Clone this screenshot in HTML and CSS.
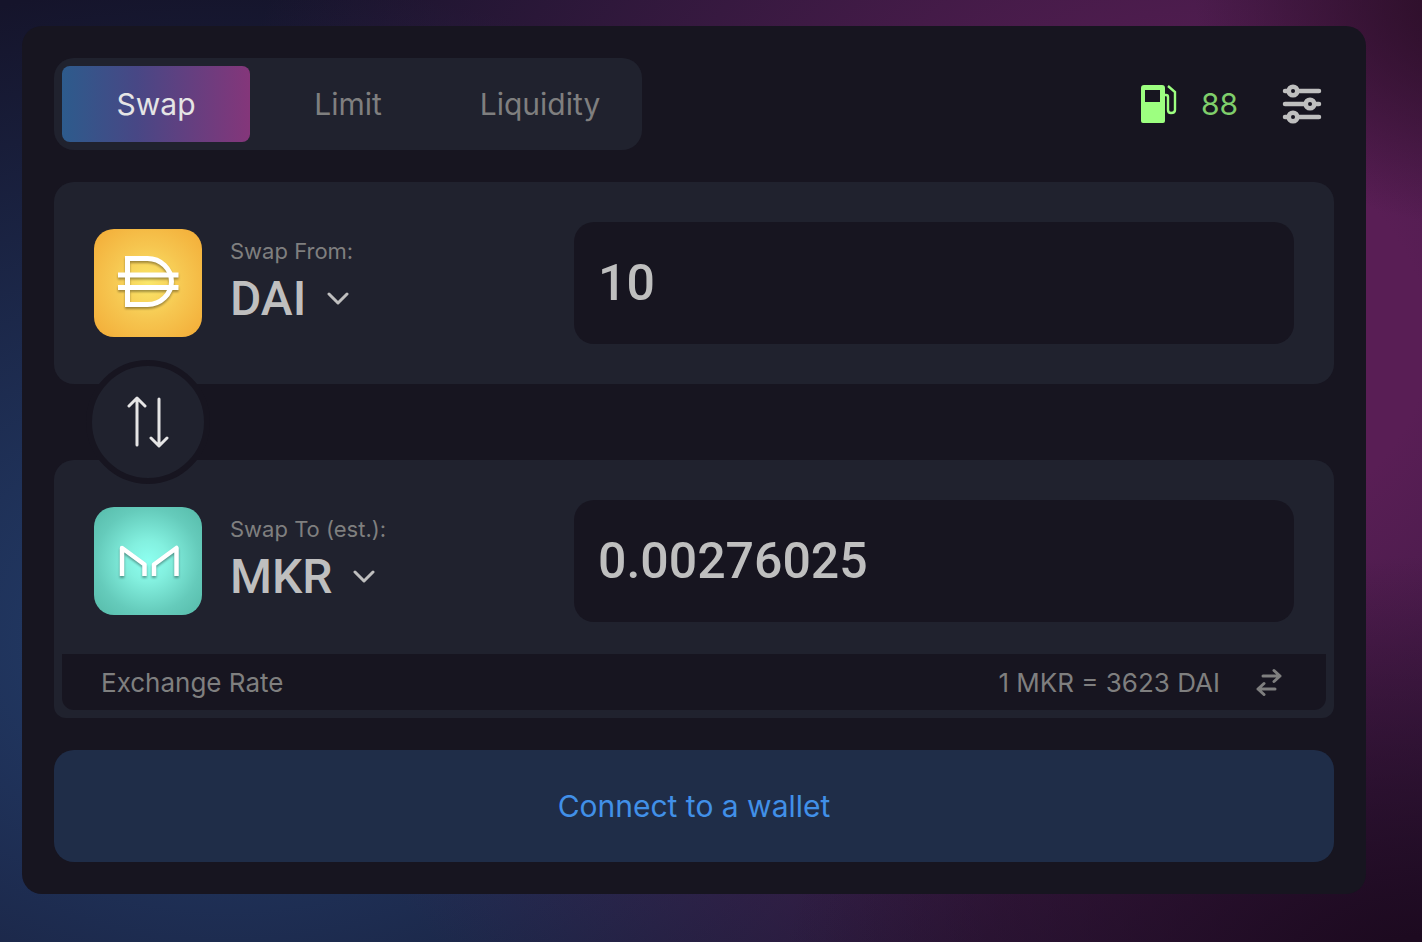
FILE: index.html
```html
<!DOCTYPE html>
<html lang="en">

  <head>
    <meta charset="UTF-8">
    <meta name="viewport" content="width=device-width, initial-scale=1.0">
    <title>Swap</title>
    <link rel="stylesheet" href="styles.css">
  </head>

  <body>
    <main class="card">
      <header class="header">
        <nav class="tabs">
          <a href="#swap" class="tab active" aria-current="page">Swap</a>
          <a href="#limit" class="tab">Limit</a>
          <a href="#liquidity" class="tab">Liquidity</a>
        </nav>
        <div class="tools">
          <div class="gas">
            <svg class="gas-icon" width="36" height="38" viewBox="0 0 36 38" aria-hidden="true">
              <path fill="currentColor" fill-rule="evenodd" d="M3 0h18a3 3 0 0 1 3 3v33a2 2 0 0 1-2 2H2a2 2 0 0 1-2-2V3a3 3 0 0 1 3-3zm1 5v12h15V5z" />
              <path fill="none" stroke="currentColor" stroke-width="2.400" d="M24 10h1a2 2 0 0 1 2 2v13c0 2 1 3 3 3s4-1 4-3V7l-7-6" />
            </svg>
            <span class="gas-price">88</span>
          </div>
          <button type="button" class="icon-btn" aria-label="Settings">
            <svg width="40" height="40" viewBox="0 0 40 40" fill="none" stroke="currentColor" stroke-width="4.500" stroke-linecap="round" aria-hidden="true">
              <path d="M3 7h4M16 7h21M3 20h21M33 20h4M3 33h4M16 33h21" />
              <circle cx="11" cy="7" r="4.300" />
              <circle cx="28" cy="20" r="4.300" />
              <circle cx="11" cy="33" r="4.300" />
            </svg>
          </button>
        </div>
      </header>

      <section class="panel">
        <div class="row">
          <div class="asset">
            <svg class="coin" viewBox="0 0 108 108" aria-hidden="true">
              <defs>
                <radialGradient id="dai" r="0.68">
                  <stop offset="0" stop-color="#fae76a" />
                  <stop offset="0.5" stop-color="#f6c650" />
                  <stop offset="1" stop-color="#f3ad38" />
                </radialGradient>
              </defs>
              <rect width="108" height="108" rx="20" fill="url(#dai)" />
              <g class="coin-mark" fill="none" stroke="#fff">
                <path stroke-width="5" d="M33.500 29.500h20a24 23 0 0 1 0 46h-20z" />
                <path stroke-width="5" d="M24 46h60.500M24 58.500h60.500" />
              </g>
            </svg>
            <div class="token">
              <label class="token-label" for="from-token">Swap From:</label>
              <div class="token-select">
                <select id="from-token">
                  <option>DAI</option>
                </select>
                <svg class="chevron" width="22" height="14" viewBox="0 0 22 14" aria-hidden="true">
                  <path d="M2 2l9 9 9-9" />
                </svg>
              </div>
            </div>
          </div>
          <input class="amount" type="text" inputmode="decimal" value="10" aria-label="Amount to swap">
        </div>
      </section>

      <button type="button" class="switch" aria-label="Switch tokens">
        <svg width="42" height="52" viewBox="0 0 42 52" aria-hidden="true">
          <path d="M10 49V3M2 10l8-8 8 8M32 3v46M24 42l8 8 8-8" />
        </svg>
      </button>

      <section class="panel panel-to">
        <div class="row">
          <div class="asset">
            <svg class="coin" viewBox="0 0 108 108" aria-hidden="true">
              <defs>
                <radialGradient id="mkr" r="0.64">
                  <stop offset="0" stop-color="#8dfff0" />
                  <stop offset="0.3" stop-color="#83f0df" />
                  <stop offset="0.75" stop-color="#65cbbb" />
                  <stop offset="1" stop-color="#5abfae" />
                </radialGradient>
              </defs>
              <rect width="108" height="108" rx="20" fill="url(#mkr)" />
              <g class="coin-mark" fill="none" stroke="#fff" stroke-width="4.500" stroke-linejoin="round">
                <path d="M28 69V41l22.500 16.500V69M60 69V57.500L82.500 41v28" />
              </g>
            </svg>
            <div class="token">
              <label class="token-label" for="to-token">Swap To (est.):</label>
              <div class="token-select">
                <select id="to-token">
                  <option>MKR</option>
                </select>
                <svg class="chevron" width="22" height="14" viewBox="0 0 22 14" aria-hidden="true">
                  <path d="M2 2l9 9 9-9" />
                </svg>
              </div>
            </div>
          </div>
          <input class="amount" type="text" inputmode="decimal" value="0.00276025" aria-label="Amount to receive">
        </div>
        <div class="rate">
          <span>Exchange Rate</span>
          <div class="rate-value">
            <span>1 MKR = 3623 DAI</span>
            <button type="button" class="icon-btn rate-flip" aria-label="Invert rate">
              <svg width="26" height="28" viewBox="0 0 26 28" aria-hidden="true">
                <path d="M7 8h17M18 2.500l6 5.500-6 5.500M19 21H2M8 15.500L2 21l6 5.500" />
              </svg>
            </button>
          </div>
        </div>
      </section>

      <button type="button" class="connect">Connect to a wallet</button>
    </main>
  </body>

</html>
```
FILE: styles.css
```css
* {
  box-sizing: border-box;
}

body {
  --card: #171520;
  --panel: #20222e;
  --muted: #7f7f7f;
  --text: #bfbfbf;
  min-height: 100vh;
  margin: 0;
  padding: 26px 56px 48px 22px;
  font-family: Inter, "Open Sans", sans-serif;
  background-color: #15142b;
  background-image:
    radial-gradient(ellipse 45% 45% at 100% 104%, #1d0a20 10%, transparent),
    radial-gradient(ellipse 20% 24% at 104% 0, #2a0d25, transparent),
    radial-gradient(ellipse 72% 100% at 86% 36%, #591e55 20%, transparent),
    radial-gradient(ellipse 60% 70% at 16% 68%, #24406f, transparent);
}

button,
input,
select {
  font-family: inherit;
  border: none;
  outline: none;
}

button,
select {
  cursor: pointer;
}

.card {
  padding: 32px;
  border-radius: 20px;
  background: var(--card);
}

/* header */
.header {
  display: flex;
  justify-content: space-between;
  align-items: center;
  margin-bottom: 32px;
}

.tabs {
  display: flex;
  gap: 4px;
  padding: 8px;
  border-radius: 20px;
  background: var(--panel);
}

.tab {
  width: 188px;
  border-radius: 8px;
  color: var(--muted);
  font-size: 30px;
  line-height: 76px;
  text-align: center;
  text-decoration: none;
}

.tab.active {
  background: linear-gradient(90deg, #2d5b8c, #484785 40%, #84367a);
  color: #e5e5e5;
}

.tools,
.gas {
  display: flex;
  align-items: center;
}

.tools {
  gap: 44px;
  padding-right: 12px;
}

.gas {
  gap: 24px;
}

.gas-icon {
  color: #9dff80;
}

.gas-price {
  color: #7fce6b;
  font-size: 30px;
}

.icon-btn {
  display: flex;
  padding: 0;
  background: none;
  color: var(--text);
}

/* token panels */
.panel {
  padding: 40px;
  border-radius: 20px;
  background: var(--panel);
}

.panel-to {
  padding: 40px 8px 8px;
  border-radius: 20px 20px 12px 12px;
}

.row {
  display: flex;
  justify-content: space-between;
  align-items: center;
}

.panel-to .row {
  padding: 0 32px 32px;
}

.asset {
  display: flex;
  align-items: center;
  gap: 28px;
}

.coin {
  width: 108px;
  height: 108px;
}

.coin-mark {
  filter: drop-shadow(0 2px 1px rgba(0, 0, 0, .35));
}

.token-label {
  display: block;
  color: var(--muted);
  font-size: 22px;
  line-height: 32px;
}

.token-select {
  display: flex;
  align-items: center;
}

.token select {
  appearance: none;
  padding: 0 42px 0 0;
  background: none;
  color: var(--text);
  font-family: Roboto, sans-serif;
  font-size: 48px;
  font-weight: 500;
  line-height: 64px;
}

.chevron {
  margin-left: -22px;
  pointer-events: none;
}

.chevron path {
  fill: none;
  stroke: var(--text);
  stroke-width: 3;
  stroke-linecap: round;
  stroke-linejoin: round;
}

.amount {
  width: 60%;
  height: 122px;
  padding: 0 24px;
  border-radius: 20px;
  background: var(--card);
  color: var(--text);
  font-family: Roboto, sans-serif;
  font-size: 50px;
  font-weight: 500;
}

/* switch button */
.switch {
  display: flex;
  justify-content: center;
  align-items: center;
  position: relative;
  width: 124px;
  height: 124px;
  margin: -24px 32px;
  border: 6px solid var(--card);
  border-radius: 50%;
  background: var(--panel);
}

.switch path {
  fill: none;
  stroke: #e5e5e5;
  stroke-width: 3;
  stroke-linecap: round;
  stroke-linejoin: round;
}

/* exchange rate */
.rate {
  display: flex;
  justify-content: space-between;
  align-items: center;
  height: 56px;
  padding: 0 44px 0 39px;
  border-radius: 0 0 12px 12px;
  background: var(--card);
  color: var(--muted);
  font-size: 26px;
}

.rate-value {
  display: flex;
  align-items: center;
  gap: 36px;
}

.rate-flip {
  color: var(--muted);
}

.rate-flip path {
  fill: none;
  stroke: currentColor;
  stroke-width: 3;
  stroke-linecap: round;
  stroke-linejoin: round;
}

/* connect */
.connect {
  width: 100%;
  height: 112px;
  margin-top: 32px;
  border-radius: 20px;
  background: #1f2d48;
  color: #4190e8;
  font-size: 30px;
}
```
